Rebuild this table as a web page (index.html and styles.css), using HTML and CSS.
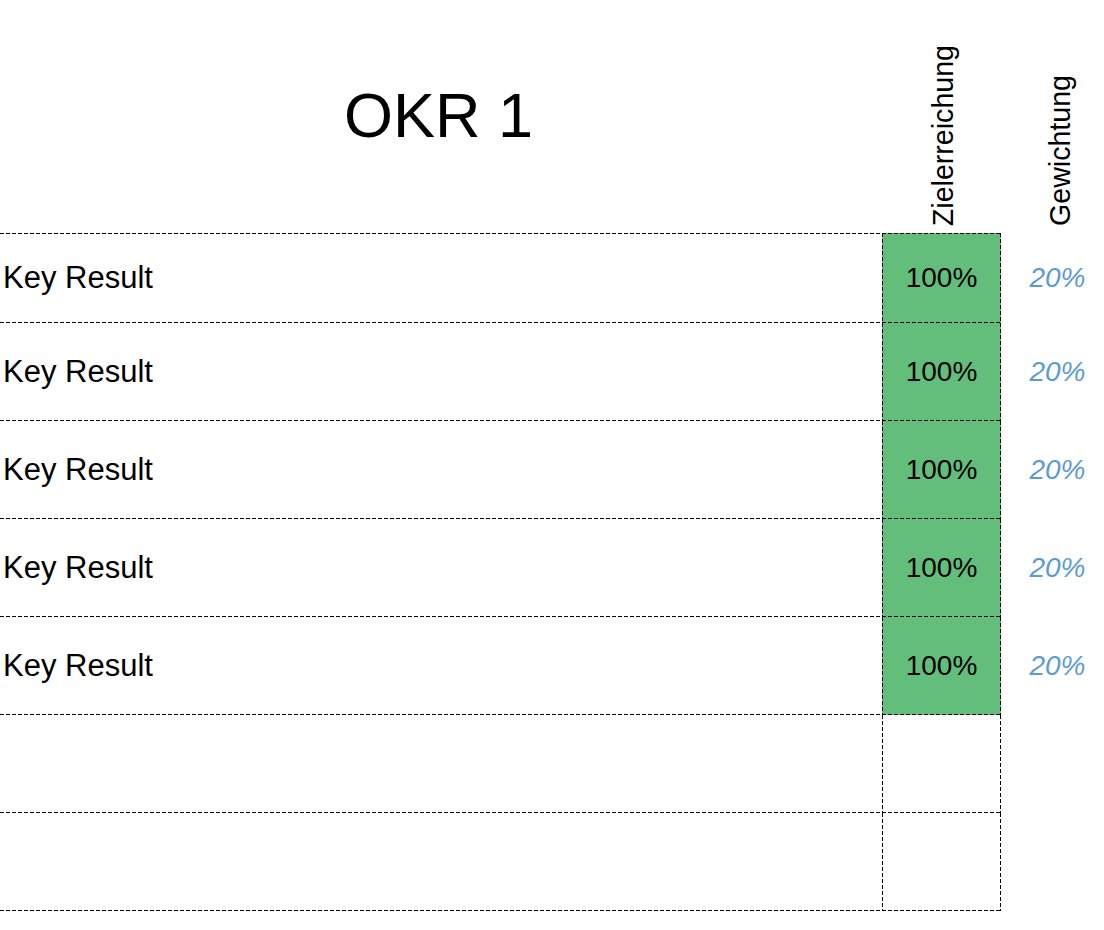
FILE: index.html
```html
<!DOCTYPE html>
<html lang="de">
<head>
<meta charset="utf-8">
<title>OKR 1</title>
<link rel="stylesheet" href="styles.css">
</head>
<body>
<div class="sheet">
  <div class="title">OKR 1</div>
  <div class="vhead vhead-score"><span>Zielerreichung</span></div>
  <div class="vhead vhead-weight"><span>Gewichtung</span></div>

  <div class="cell kr first">Key Result</div>
  <div class="cell score filled first">100%</div>
  <div class="weight">20%</div>

  <div class="cell kr">Key Result</div>
  <div class="cell score filled">100%</div>
  <div class="weight">20%</div>

  <div class="cell kr">Key Result</div>
  <div class="cell score filled">100%</div>
  <div class="weight">20%</div>

  <div class="cell kr">Key Result</div>
  <div class="cell score filled">100%</div>
  <div class="weight">20%</div>

  <div class="cell kr">Key Result</div>
  <div class="cell score filled">100%</div>
  <div class="weight">20%</div>

  <div class="cell kr"></div>
  <div class="cell score"></div>
  <div class="weight"></div>

  <div class="cell kr"></div>
  <div class="cell score"></div>
  <div class="weight"></div>
</div>
</body>
</html>
```
FILE: styles.css
```css
html, body {
  margin: 0;
  padding: 0;
  background: #ffffff;
}

body {
  font-family: "Liberation Sans", Arial, sans-serif;
  color: #000000;
  width: 1104px;
  height: 930px;
  overflow: hidden;
}

.sheet {
  display: grid;
  grid-template-columns: 882px 119px 103px;
  grid-template-rows: 233px 90px repeat(6, 98px);
}

.title {
  display: flex;
  align-items: center;
  justify-content: center;
  font-size: 63px;
  padding-bottom: 4px;
  padding-right: 5px;
}

.vhead {
  display: flex;
  align-items: flex-end;
  justify-content: center;
  padding-bottom: 7px;
}

.vhead span {
  writing-mode: vertical-rl;
  transform: rotate(180deg);
  font-size: 28.6px;
  line-height: 1;
}

.vhead-score {
  padding-left: 3px;
}

.vhead-weight {
  padding-left: 16px;
}

/* dashed grid lines, drawn as 4px dash / 2px gap */
.cell {
  --dash-h: repeating-linear-gradient(90deg, #000 0 4px, transparent 4px 6px);
  --dash-v: repeating-linear-gradient(180deg, #000 0 4px, transparent 4px 6px);
  display: flex;
  align-items: center;
  font-size: 31px;
  background-image: var(--dash-h);
  background-size: 100% 1px;
  background-position: left bottom;
  background-repeat: no-repeat;
}

.cell.first {
  background-image: var(--dash-h), var(--dash-h);
  background-size: 100% 1px, 100% 1px;
  background-position: left bottom, left top;
}

.kr {
  padding-left: 3px;
}

.score {
  justify-content: center;
  font-size: 28px;
  background-image: var(--dash-h), var(--dash-v), var(--dash-v);
  background-size: 100% 1px, 1px 100%, 1px 100%;
  background-position: left bottom, left top, right top;
}

.score.first {
  background-image: var(--dash-h), var(--dash-h), var(--dash-v), var(--dash-v);
  background-size: 100% 1px, 100% 1px, 1px 100%, 1px 100%;
  background-position: left bottom, left top, left top, right top;
}

.score.filled {
  background-color: #63be7b;
}

.weight {
  display: flex;
  align-items: center;
  justify-content: center;
  padding-left: 10px;
  font-size: 28px;
  font-style: italic;
  color: #5b9bd5;
}
```
